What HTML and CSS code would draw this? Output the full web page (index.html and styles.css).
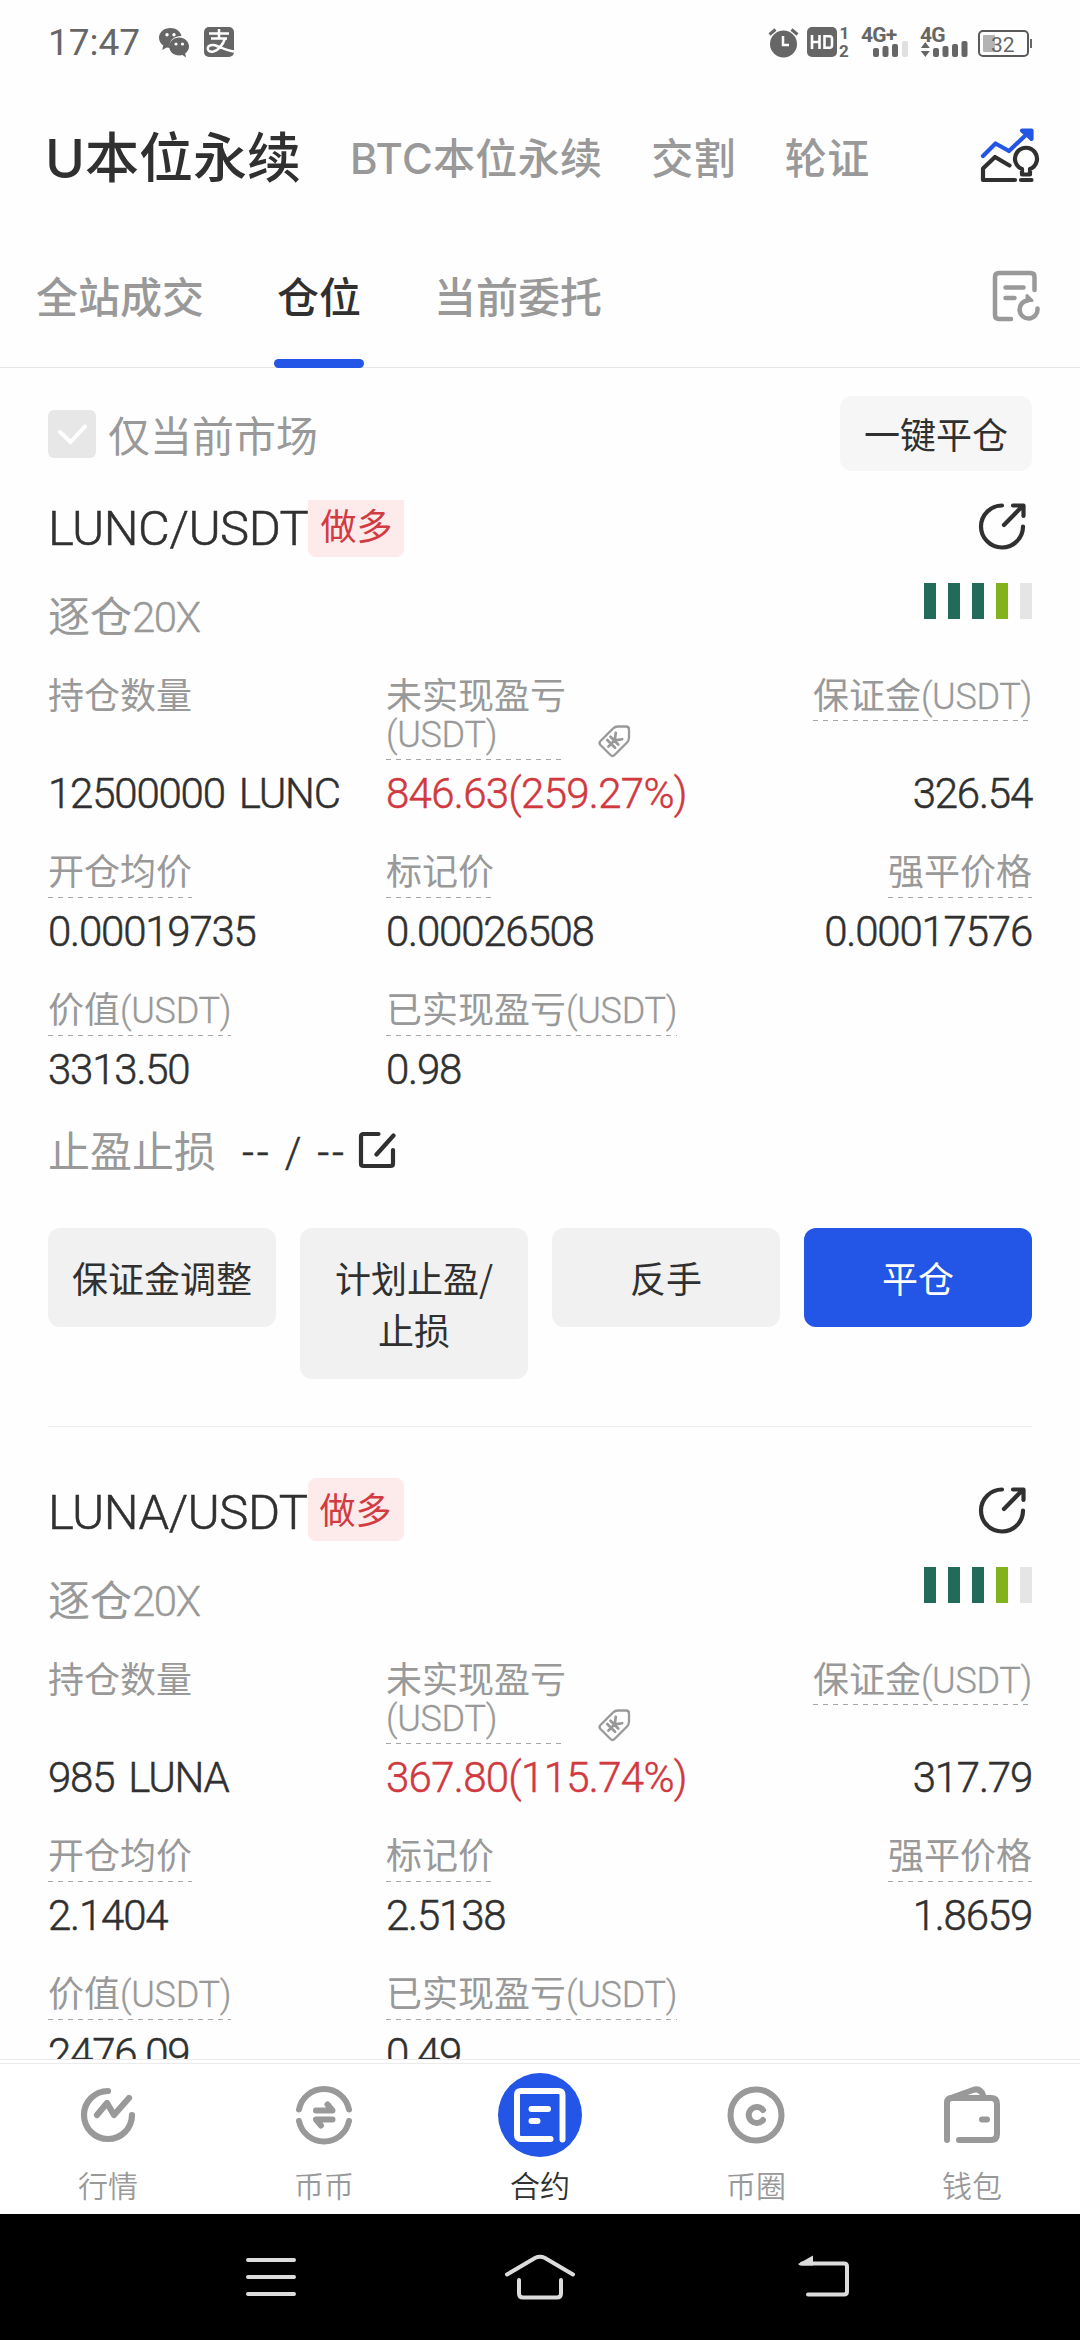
FILE: index.html
```html
<!DOCTYPE html>
<html lang="zh-CN">
<head>
<meta charset="utf-8">
<title>合约仓位</title>
<link rel="stylesheet" href="styles.css">
</head>
<body>
<div class="screen">
  <header class="status">
    <div class="status-left">
      <span class="clock">17:47</span>
      <svg class="ic-wechat" width="30" height="31" viewBox="0 0 30 31"><path fill="#666" d="M11.5 1C5 1 0 5.200 0 10.800c0 3.200 1.700 6 4.300 7.800L3.200 23l4.600-2.500c1 .3 2.200.4 3.200.4C9.500 14.500 14 9 22.500 9 21.500 4.300 17 1 11.500 1z"/><path fill="#666" d="M30 19.500c0-5-4.400-9-9.900-9s-9.900 4-9.900 9 4.400 9 9.900 9c1.200 0 2.300-.2 3.400-.5L27 30.500l-.8-4.100c2.400-1.700 3.800-4.100 3.800-6.900z"/><g fill="#fff"><circle cx="8" cy="7.800" r="1.700"/><circle cx="15" cy="7.800" r="1.700"/><circle cx="17" cy="17" r="1.600"/><circle cx="23.500" cy="17" r="1.600"/></g></svg>
      <svg class="ic-pay" width="30" height="30" viewBox="0 0 30 30"><rect width="30" height="30" rx="5" fill="#666"/><g fill="none" stroke="#fff" stroke-width="2.500"><path d="M5 6.500h20M15 2v9.500M7 11.500h16"/><path d="M21 11.500c-2 6-6.500 12-11.500 13C5.500 25.300 3.500 23.500 3.800 21c.4-2.800 5-3.700 9.200-2 5 2 11 5 17 5.500" /></g></svg>
    </div>
    <svg class="status-right" width="265" height="34" viewBox="768 25 265 34">
      <g fill="#666">
        <circle cx="783.500" cy="44" r="13.500"/><path d="M769.500 34.500l6-5M791.500 29.500l6 5" stroke="#666" stroke-width="3" fill="none"/>
        <path d="M783 36v9h6" fill="none" stroke="#fff" stroke-width="2.500"/>
        <rect x="807" y="27" width="30" height="30" rx="5"/>
        <path d="M812 35v14M819.500 35v14M812 42h7.500M824.500 36.200h5q2.500 0 2.500 2.500v6.600q0 2.500-2.500 2.500h-5z" fill="none" stroke="#fff" stroke-width="2.600"/>
        <text x="839.500" y="39" class="st-num">1</text><text x="839" y="57" class="st-num">2</text>
        <text x="861" y="42" class="st-net">4G+</text>
        <text x="920" y="42" class="st-net">4G</text>
        <rect x="873" y="48" width="6" height="9" rx="2"/><rect x="882.500" y="46" width="6" height="11" rx="2"/><rect x="892" y="44" width="6" height="13" rx="2"/><rect x="902" y="41" width="6" height="16" rx="2" fill="#e0e0e0"/>
        <rect x="933" y="48" width="6" height="9" rx="2"/><rect x="942.500" y="46" width="6" height="11" rx="2"/><rect x="952" y="44" width="6" height="13" rx="2"/><rect x="961.500" y="41" width="6" height="16" rx="2"/>
        <path d="M925.300 42l4.500 6h-9zM925.300 57l4.500-6h-9z"/>
        <rect x="979" y="31" width="49" height="25" rx="4" fill="none" stroke="#5a5a5a" stroke-width="2"/>
        <rect x="1030" y="39" width="2" height="9"/><rect x="983" y="35" width="12" height="17" rx="1" fill="#b3b3b3"/>
        <text x="991" y="52" class="st-bat">32</text>
      </g>
    </svg>
  </header>

  <nav class="markets">
    <span class="market market-on">U本位永续</span>
    <span class="market">BTC本位永续</span>
    <span class="market">交割</span>
    <span class="market">轮证</span>
    <svg class="market-icon" width="60" height="56" viewBox="0 0 60 56"><g fill="none" stroke-width="4.200" stroke-linecap="round" stroke-linejoin="round"><path stroke="#2355e6" d="M3 29L15.500 16.500 29 24 48 6"/><path fill="#2355e6" stroke="#2355e6" d="M42 3.500h9.500V12l-4-4z"/><path stroke="#303030" d="M29.500 38.500L15 30 3 41.500V53h32M41 53h10.500M42 47.500v-5.500a11 11 0 1 1 8 0v5.500z"/></g></svg>
  </nav>

  <nav class="tabs">
    <span class="tab">全站成交</span>
    <span class="tab tab-on">仓位</span>
    <span class="tab">当前委托</span>
    <svg class="tabs-icon" width="48" height="52" viewBox="0 0 48 52"><g fill="none" stroke="#999" stroke-width="4.500" stroke-linecap="round" stroke-linejoin="round"><path d="M42.500 20V7q0-4-4-4H7Q3 3 3 7v38q0 4 4 4h12M13.500 17.500h18M13.500 28h9"/><path d="M36 30.500a9 9 0 1 0 9.500 8"/><path d="M35 25.500v5h5z" fill="#999" stroke-width="3"/></g></svg>
  </nav>

  <main class="list">
    <div class="filter">
      <svg width="48" height="48" viewBox="0 0 48 48"><rect width="48" height="48" rx="6" fill="#e7e7e7"/><path d="M12 22l10.500 10L37 16.500" fill="none" stroke="#fff" stroke-width="4" stroke-linecap="round"/></svg>
      <span class="filter-text">仅当前市场</span>
      <button class="close-all">一键平仓</button>
    </div>

    <div class="cards">
      <section class="card">
        <div class="card-head">
          <span class="pair">LUNC/USDT</span><span class="side">做多</span>
          <svg class="share" width="48" height="48" viewBox="0 0 48 48"><g fill="none" stroke="#303030" stroke-width="4.200" stroke-linecap="round" stroke-linejoin="round"><path d="M24 3.500A21 21 0 1 0 45 24.500M26 23L44.500 4M35 3.500h10.500V14"/></g></svg>
        </div>
        <div class="card-sub"><span class="lever">逐仓<span class="lat">20X</span></span><span class="meter"><i></i><i></i><i></i><i class="m4"></i><i class="m5"></i></span></div>
        <div class="row row-tall">
          <div class="cell"><span class="label plain">持仓数量</span></div>
          <div class="cell cell-pnl"><span class="label pnl">未实现盈亏<br><span class="lat">(USDT)</span></span><svg class="tag" width="34" height="34" viewBox="0 0 34 34"><g fill="none" stroke="#999" stroke-width="2.300" stroke-linecap="round" stroke-linejoin="round"><path d="M16 4.500Q18 2.500 21 2.500h8q3 0 3 3v8q0 3-2 5L17.500 31q-2 2-4 0L3.500 21q-2-2 0-4z"/><path transform="rotate(45 17 17)" stroke-width="2.700" d="M12.500 10l4.500 6 4.500-6M17 16v9M11.500 16.500h11M11.500 21h11"/></g></svg></div>
          <div class="cell right"><span class="label">保证金<span class="lat">(USDT)</span></span></div>
        </div>
        <div class="row vals"><span>12500000 LUNC</span><span class="red">846.63(259.27%)</span><span class="right">326.54</span></div>
        <div class="row labels"><div class="cell"><span class="label">开仓均价</span></div><div class="cell"><span class="label">标记价</span></div><div class="cell right"><span class="label">强平价格</span></div></div>
        <div class="row vals"><span>0.00019735</span><span>0.00026508</span><span class="right">0.00017576</span></div>
        <div class="row labels"><div class="cell"><span class="label">价值<span class="lat">(USDT)</span></span></div><div class="cell"><span class="label">已实现盈亏<span class="lat">(USDT)</span></span></div></div>
        <div class="row vals"><span>3313.50</span><span>0.98</span></div>
        <div class="stops"><span class="stops-label">止盈止损</span><span class="stops-val">-- / --</span><svg width="38" height="38" viewBox="0 0 38 38"><g fill="none" stroke="#303030" stroke-width="4.200" stroke-linecap="round" stroke-linejoin="round"><path d="M20.500 3H5.500Q3 3 3 5.500v27Q3 35 5.500 35h27q2.500 0 2.500-2.500V19M18.500 23.500L35.500 4.500"/></g></svg></div>
        <div class="actions"><button class="btn">保证金调整</button><button class="btn">计划止盈/<br>止损</button><button class="btn">反手</button><button class="btn primary">平仓</button></div>
      </section>

      <section class="card">
        <div class="card-head">
          <span class="pair">LUNA/USDT</span><span class="side">做多</span>
          <svg class="share" width="48" height="48" viewBox="0 0 48 48"><g fill="none" stroke="#303030" stroke-width="4.200" stroke-linecap="round" stroke-linejoin="round"><path d="M24 3.500A21 21 0 1 0 45 24.500M26 23L44.500 4M35 3.500h10.500V14"/></g></svg>
        </div>
        <div class="card-sub"><span class="lever">逐仓<span class="lat">20X</span></span><span class="meter"><i></i><i></i><i></i><i class="m4"></i><i class="m5"></i></span></div>
        <div class="row row-tall">
          <div class="cell"><span class="label plain">持仓数量</span></div>
          <div class="cell cell-pnl"><span class="label pnl">未实现盈亏<br><span class="lat">(USDT)</span></span><svg class="tag" width="34" height="34" viewBox="0 0 34 34"><g fill="none" stroke="#999" stroke-width="2.300" stroke-linecap="round" stroke-linejoin="round"><path d="M16 4.500Q18 2.500 21 2.500h8q3 0 3 3v8q0 3-2 5L17.500 31q-2 2-4 0L3.500 21q-2-2 0-4z"/><path transform="rotate(45 17 17)" stroke-width="2.700" d="M12.500 10l4.500 6 4.500-6M17 16v9M11.500 16.500h11M11.500 21h11"/></g></svg></div>
          <div class="cell right"><span class="label">保证金<span class="lat">(USDT)</span></span></div>
        </div>
        <div class="row vals"><span>985 LUNA</span><span class="red">367.80(115.74%)</span><span class="right">317.79</span></div>
        <div class="row labels"><div class="cell"><span class="label">开仓均价</span></div><div class="cell"><span class="label">标记价</span></div><div class="cell right"><span class="label">强平价格</span></div></div>
        <div class="row vals"><span>2.1404</span><span>2.5138</span><span class="right">1.8659</span></div>
        <div class="row labels"><div class="cell"><span class="label">价值<span class="lat">(USDT)</span></span></div><div class="cell"><span class="label">已实现盈亏<span class="lat">(USDT)</span></span></div></div>
        <div class="row vals"><span>2476.09</span><span>0.49</span></div>
      </section>
    </div>
  </main>

  <nav class="dock">
    <div class="dock-item"><svg width="84" height="84" viewBox="0 0 84 84"><g fill="none" stroke="#999" stroke-width="6.200" stroke-linecap="round" stroke-linejoin="round"><path d="M42 18A24 24 0 1 0 66 42M31 42l10-12 7 12 15-17"/></g></svg><span>行情</span></div>
    <div class="dock-item"><svg width="84" height="84" viewBox="0 0 84 84"><g fill="none" stroke="#999" stroke-width="6" stroke-linecap="round" stroke-linejoin="round"><path d="M17 36.500a25.500 25.500 0 0 1 50 0M17 48a25.500 25.500 0 0 0 50 0"/><path d="M34 37.500h16.500l-5-6M50.500 46.500H34l5 6"/></g></svg><span>币币</span></div>
    <div class="dock-item on"><svg width="84" height="84" viewBox="0 0 84 84"><circle cx="42" cy="42" r="42" fill="#2355e6"/><g fill="none" stroke="#fff" stroke-width="6" stroke-linecap="round" stroke-linejoin="round"><path d="M52.500 66H23q-4 0-4-4V22q0-4 4-4h37.500q4 0 4 4v44.500M33.500 36h16.500M33.500 48h6"/></g></svg><span>合约</span></div>
    <div class="dock-item"><svg width="84" height="84" viewBox="0 0 84 84"><g fill="none" stroke="#999" stroke-width="6" stroke-linecap="round"><circle cx="42" cy="42" r="25.500"/><path d="M49 37a8 8 0 1 0 0 10"/></g></svg><span>币圈</span></div>
    <div class="dock-item"><svg width="84" height="84" viewBox="0 0 84 84"><g fill="none" stroke="#999" stroke-width="6" stroke-linecap="round" stroke-linejoin="round"><path d="M17 67V30q0-5 5-5h39q6 0 6 6v30q0 6-6 6H29M52 46.500h5"/><path d="M21 25l22-8q7-2.500 10 5"/></g></svg><span>钱包</span></div>
  </nav>

  <footer class="sysbar">
    <svg width="52" height="46" viewBox="0 0 52 46"><path d="M3 6h46M3 23h46M3 40h46" stroke="#dcdcdc" stroke-width="4" stroke-linecap="round"/></svg>
    <svg class="home" width="72" height="46" viewBox="0 0 72 46"><path d="M3 20.500L31 4q5-2.500 10 0L69 20.500M15 26v13.500q0 4 4 4h34q4 0 4-4V26" fill="none" stroke="#dcdcdc" stroke-width="4" stroke-linecap="round"/></svg>
    <svg class="back" width="52" height="46" viewBox="0 0 52 46"><path d="M4 9.500h42q3 0 3 3v25q0 3-3 3H10" fill="none" stroke="#dcdcdc" stroke-width="4" stroke-linecap="round"/><path d="M0 10L15 1.500v10H2z" fill="#dcdcdc"/></svg>
  </footer>
</div>
</body>
</html>
```
FILE: styles.css
```css
* { box-sizing: border-box; }
body {
  margin: 0;
  background: #fefefe;
  color: #303030;
  font-family: Roboto, "Noto Sans CJK SC", sans-serif;
}
svg { display: block; flex: none; }
.screen { width: 1080px; height: 2340px; display: flex; flex-direction: column; overflow: hidden; }

.status { height: 84px; padding: 25px 47px 0 48px; display: flex; justify-content: space-between; flex: none; }
.status-left { display: flex; color: #666; }
.status-right { overflow: visible; }
.clock { width: 111px; font-size: 37px; line-height: 36px; }
.ic-wechat { margin-top: 2px; }
.ic-pay { margin: 2px 0 0 15px; }
.st-num { font: 700 17px Roboto, sans-serif; }
.st-net { font: 700 21px Roboto, sans-serif; letter-spacing: -0.8px; }
.st-bat { font: 400 21px Roboto, sans-serif; }

.markets { height: 150px; padding: 0 40px 0 45px; display: flex; align-items: center; flex: none; font-family: Inter, "Noto Sans CJK SC", sans-serif; font-weight: 500; }
.market { font-size: 42px; line-height: 60px; color: #999; margin-right: 49px; white-space: nowrap; letter-spacing: 0.3px; }
.market-on { font-size: 54px; line-height: 78px; color: #303030; letter-spacing: 0; }
.market-icon { margin: -8px 0 0 auto; }

.tabs { height: 134px; padding: 0 40px 0 36px; display: flex; flex: none; border-bottom: 1px solid #e6e6e6; font-family: "Noto Sans CJK SC", sans-serif; font-weight: 500; }
.tab { font-size: 42px; line-height: 60px; padding-top: 31px; color: #999; margin-right: 70px; white-space: nowrap; }
.tab-on { color: #303030; width: 90px; text-align: center; position: relative; }
.tab-on::after { content: ""; position: absolute; left: 0; bottom: -1px; width: 90px; height: 9px; border-radius: 5px; background: #2355e6; }
.tabs-icon { margin: 36px 0 0 auto; }

.list { height: 1691px; flex: none; overflow: hidden; }
.filter { height: 132px; padding: 28px 48px 0; display: flex; }
.filter svg { margin-top: 14px; }
.filter-text { margin-left: 12px; font-size: 42px; line-height: 60px; padding-top: 12px; color: #999; }
.close-all { margin-left: auto; width: 192px; height: 75px; border: 0; border-radius: 12px; background: #f6f6f6; color: #303030; font: 36px/52px "Noto Sans CJK SC", sans-serif; padding: 0 0 1px; }

.cards { overflow: hidden; padding: 0 48px; }
.card { height: 984px; }
.card:first-child { margin-top: -57px; border-bottom: 1px solid #ebebeb; }
.card-head { display: flex; padding-top: 51px; height: 134px; }
.pair { font-size: 49px; line-height: 70px; font-weight: 300; letter-spacing: -0.5px; -webkit-text-stroke: 0.5px; }
.side { width: 96px; height: 63px; border-radius: 8px; background: #fdeaea; color: #d13b41; font-size: 36px; line-height: 68px; text-align: center; }
.share { margin: 8px 6px 0 auto; }
.card-sub { display: flex; justify-content: space-between; height: 98px; color: #999; font-size: 42px; line-height: 60px; }
.lever { padding-top: 11px; }
.lat { font-weight: 300; letter-spacing: -0.3px; -webkit-text-stroke: 0.3px; }
.lever .lat { letter-spacing: -1.5px; }
.meter { display: flex; gap: 12px; padding-top: 6px; }
.meter i { width: 12px; height: 36px; background: #226a59; }
.meter .m4 { background: #80b31e; }
.meter .m5 { background: #e5e5e5; }

.row { display: grid; grid-template-columns: 338px 1fr 300px; }
.cell { display: flex; align-items: flex-start; }
.cell.right { justify-content: flex-end; }
.label {
  font-size: 36px; line-height: 39px; color: #999; padding: 3px 0 4px; white-space: nowrap;
  background: repeating-linear-gradient(90deg, #a6a6a6 0 5px, transparent 5px 10px) left bottom / 100% 1px no-repeat;
}
.label.plain { background: none; }
.label.pnl { width: 176px; line-height: 38px; padding: 3px 0 6px; }
.row-tall { height: 91px; }
.tag { margin: 49px 0 0 35px; }
.labels { height: 52px; }
.labels .label { padding: 2px 0 5px; }
.vals { height: 86px; font-size: 42px; line-height: 55px; font-weight: 300; letter-spacing: -1.2px; word-spacing: 5px; white-space: nowrap; -webkit-text-stroke: 0.5px; }
.vals .right { text-align: right; }
.vals .red { color: #d0393f; letter-spacing: -0.7px; }

.stops { display: flex; height: 108px; margin-top: -8px; font-size: 42px; line-height: 65px; }
.stops-label { color: #999; width: 194px; }
.stops-val { width: 116px; font-weight: 300; letter-spacing: 2.8px; white-space: nowrap; -webkit-text-stroke: 0.5px; }
.stops svg { margin-top: 11px; }
.actions { display: flex; gap: 24px; align-items: flex-start; }
.btn { width: 228px; border: 0; border-radius: 12px; background: #f1f1f1; color: #303030; font: 36px/52px "Noto Sans CJK SC", sans-serif; padding: 23px 0 24px; }
.primary { background: #2355e6; color: #fff; }

.dock { height: 155px; flex: none; display: grid; grid-template-columns: repeat(5, 1fr); border-top: 1px solid #ebebeb; background: linear-gradient(#ebebeb, #ebebeb) 0 3px / 100% 1px no-repeat #fff; }
.dock-item { display: flex; flex-direction: column; align-items: center; padding-top: 13px; font: 350 30px/44px "Noto Sans CJK SC", sans-serif; color: #999; }
.dock-item span { margin-top: 5px; }
.dock-item.on { color: #303030; }

.sysbar { flex: 1; background: #000; display: flex; padding: 40px 0 0 245px; }
.home { margin-left: 207px; }
.back { margin-left: 222px; }
```
